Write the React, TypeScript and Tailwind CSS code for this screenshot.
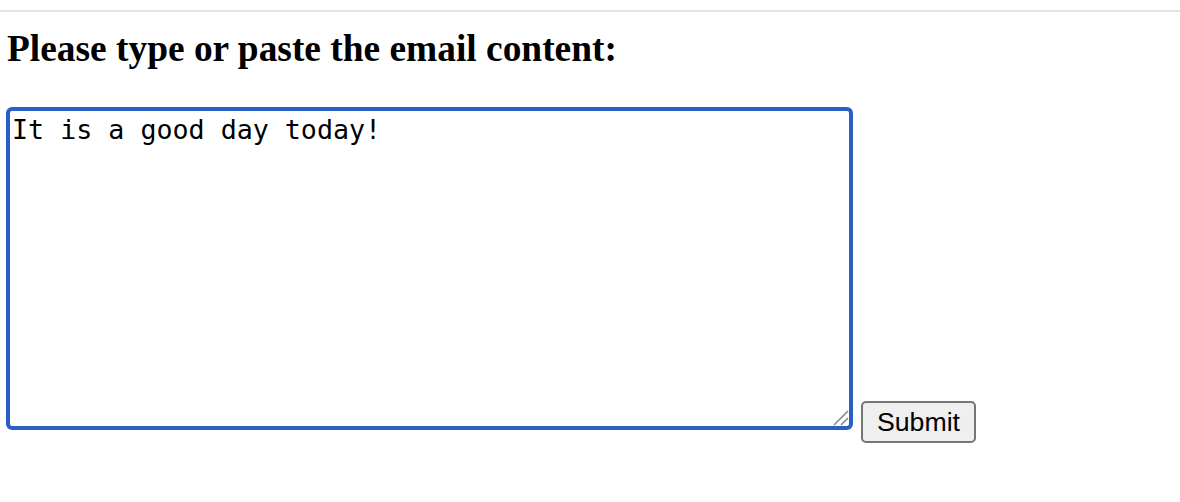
export default function App() {
  return (
    <div className="min-h-[502px] bg-white pt-[10px]">
      <div className="h-[2px] bg-[#e3e3e3]" />
      <div className="px-[6px]">
        <h3 className="mt-[16px] mb-[38px] ml-[1px] font-['Liberation_Serif',serif] text-[37.4px] font-bold leading-[41.4px] text-black">
          Please type or paste the email content:
        </h3>
        <div className="flex items-end">
          <div className="relative">
            <textarea
              defaultValue="It is a good day today!"
              className="block h-[323px] w-[847px] resize-none rounded-[6px] border-[4px] border-[#2b5fc8] px-[2px] pt-[3px] font-['DejaVu_Sans_Mono',monospace] text-[26.67px] leading-[1.17] text-black outline-none"
            />
            <svg
              className="pointer-events-none absolute bottom-[4px] right-[4px]"
              width="16"
              height="16"
              viewBox="0 0 16 16"
            >
              <path d="M15 1 L1 15 M15 8 L8 15" stroke="#8a8a8a" strokeWidth="1.6" />
            </svg>
          </div>
          <button className="mb-[-13px] ml-[8px] h-[42px] w-[115px] rounded-[5px] border-2 border-[#767676] bg-[#efefef] font-['Liberation_Sans',Arial,sans-serif] text-[26.67px] leading-none text-black">
            Submit
          </button>
        </div>
      </div>
    </div>
  );
}
